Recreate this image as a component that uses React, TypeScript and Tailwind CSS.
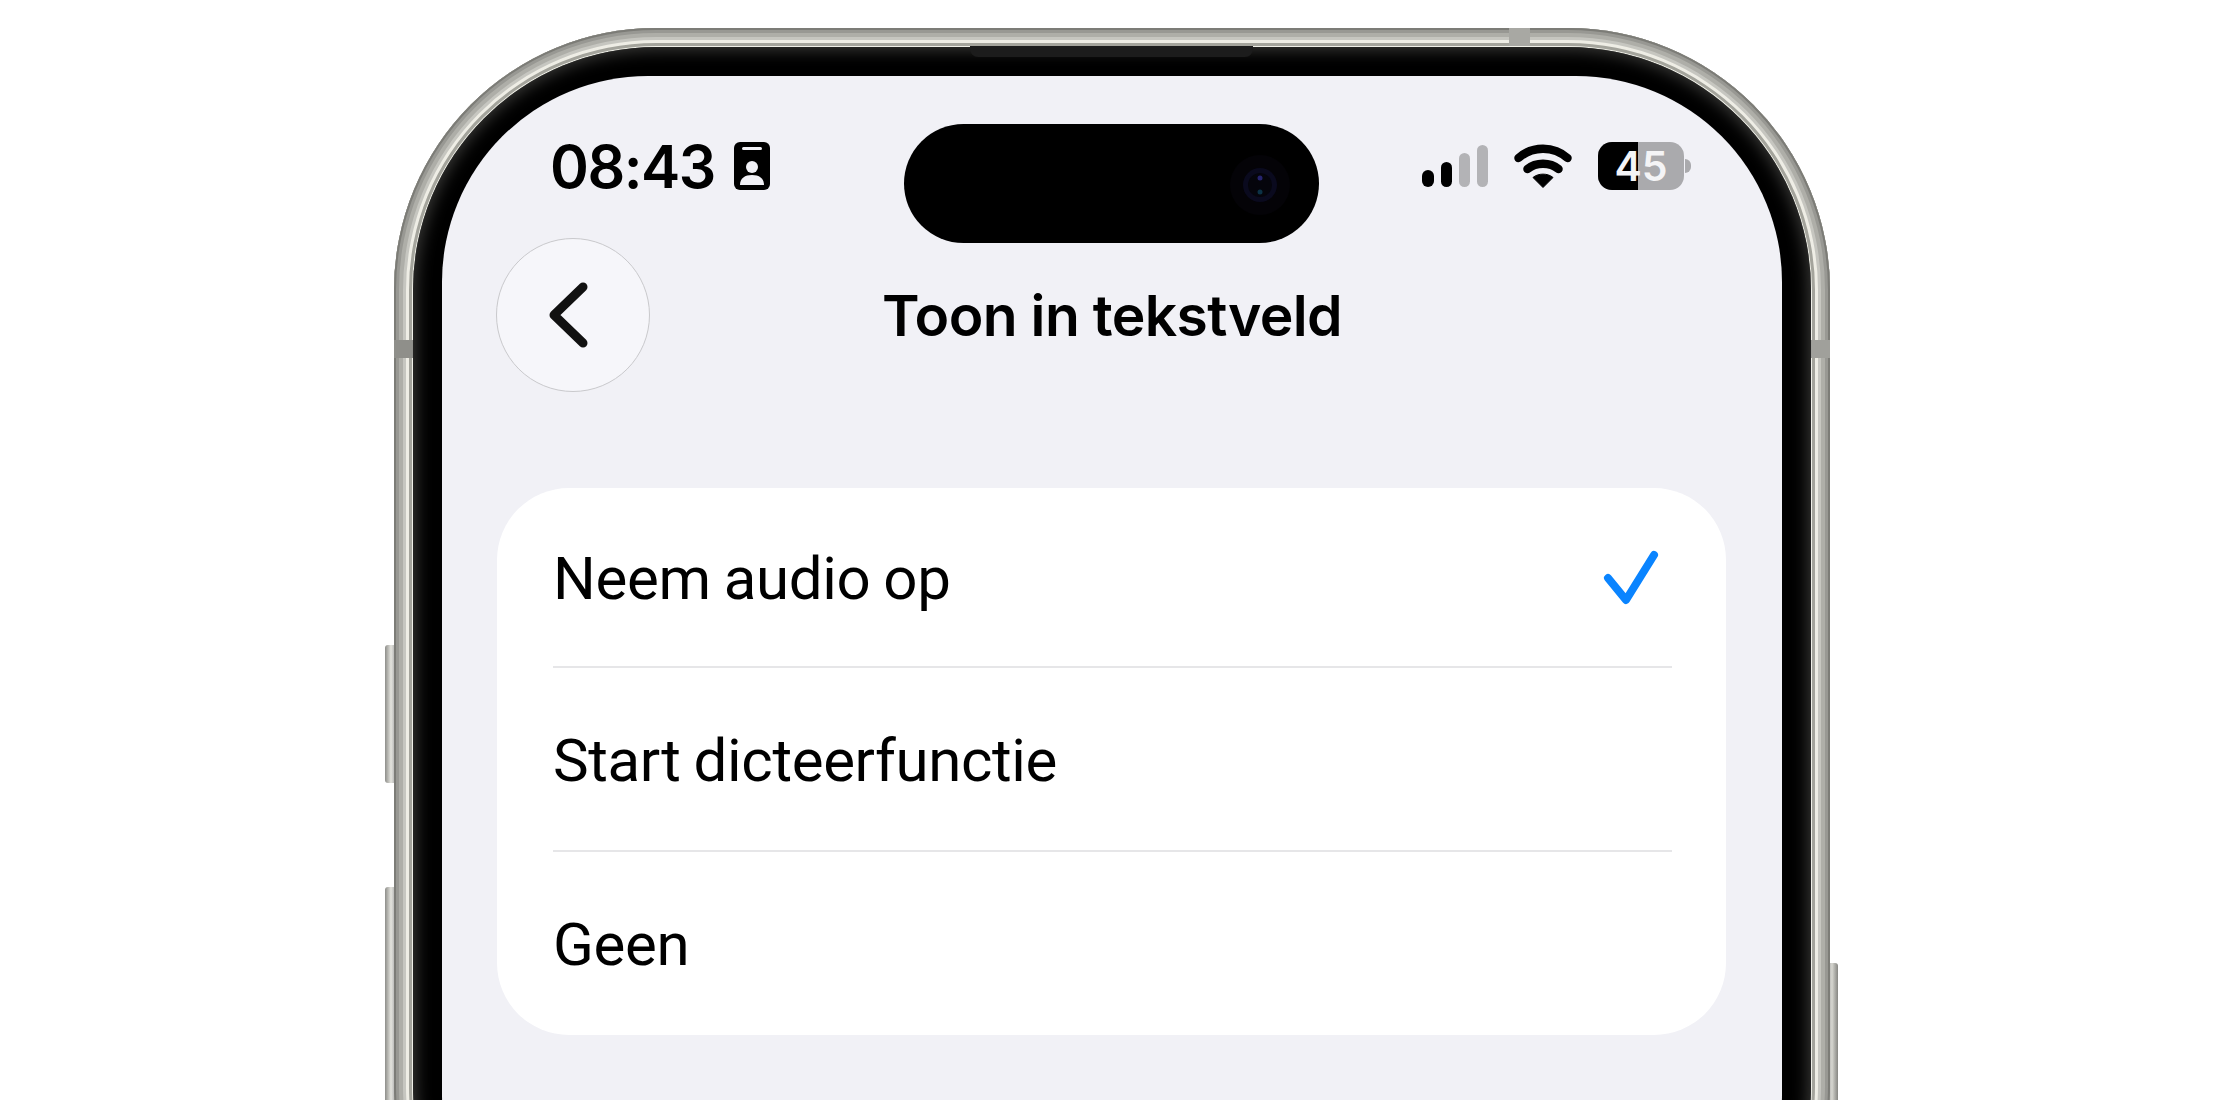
const rows = [
  { label: "Neem audio op", checked: true, height: "h-[180px]" },
  { label: "Start dicteerfunctie", checked: false, height: "h-[184px]" },
  { label: "Geen", checked: false, height: "h-[183px]" },
]

function IdCard() {
  return (
    <svg width="36" height="48" viewBox="0 0 36 48">
      <rect width="36" height="48" rx="6" fill="#000" />
      <rect x="8" y="5" width="20" height="3" rx="1.5" fill="#f1f1f6" />
      <circle cx="18" cy="25" r="6" fill="#f1f1f6" />
      <path d="M6 43c0-7 5-10 12-10s12 3 12 10z" fill="#f1f1f6" />
    </svg>
  )
}

function Signal() {
  return (
    <div className="flex h-[42px] items-end gap-[7px]">
      <div className="h-[17px] w-[12px] rounded-[6px] bg-black" />
      <div className="h-[25px] w-[11px] rounded-[6px] bg-black" />
      <div className="h-[34px] w-[11px] rounded-[6px] bg-[#b3b3b6]" />
      <div className="h-[42px] w-[11px] rounded-[6px] bg-[#b3b3b6]" />
    </div>
  )
}

function Wifi() {
  return (
    <svg width="58" height="44" viewBox="0 0 58 44" fill="none">
      <path d="M4.5 14C18 1.500 40 1.500 53.500 14" stroke="#000" strokeWidth="8.5" strokeLinecap="round" />
      <path d="M13.500 25C22 18 36 18 44.500 25" stroke="#000" strokeWidth="8.5" strokeLinecap="round" />
      <path d="M19 33.500C24 29 34 29 39 33.500L29 43.500z" fill="#000" stroke="#000" strokeWidth="1" strokeLinejoin="round" />
    </svg>
  )
}

function Battery() {
  return (
    <div className="flex items-center gap-[1px]">
      <div className="relative flex h-[48px] w-[86px] items-center justify-center overflow-hidden rounded-[14px] bg-[#aaaaad]">
        <div className="absolute inset-y-0 left-0 w-[40px] bg-black" />
        <span className="relative text-[41px] leading-none font-semibold text-[#f4f4f6]">45</span>
      </div>
      <div className="h-[14px] w-[6px] rounded-r-[6px] bg-[#aaaaad]" />
    </div>
  )
}

function Camera() {
  return (
    <svg width="60" height="60" viewBox="0 0 60 60" className="absolute top-[31px] right-[29px]">
      <circle cx="30" cy="30" r="30" fill="#040307" />
      <circle cx="30" cy="30" r="17" fill="#0a0a1e" />
      <circle cx="30" cy="30" r="12" fill="#05050c" />
      <circle cx="30" cy="23" r="2.500" fill="#26246e" />
      <circle cx="30" cy="37" r="2.500" fill="#0c3246" />
    </svg>
  )
}

export default function App() {
  return (
    <div className="flex h-[1100px] justify-center overflow-hidden bg-white pt-[28px] font-['Inter',sans-serif] text-black">
      <div className="relative h-[1320px] w-[1436px]">
        {/* side buttons */}
        <div className="absolute top-[617px] -left-[9px] h-[138px] w-[12px] rounded-l-[3px] bg-gradient-to-r from-[#8e8e8a] via-[#e4e4de] to-[#98989a]" />
        <div className="absolute top-[859px] -left-[9px] h-[300px] w-[12px] rounded-l-[3px] bg-gradient-to-r from-[#8e8e8a] via-[#e4e4de] to-[#98989a]" />
        <div className="absolute top-[935px] -right-[8px] h-[300px] w-[12px] rounded-r-[3px] bg-gradient-to-r from-[#98989a] via-[#d6d6d0] to-[#868682]" />

        <div className="relative h-full rounded-[262px] bg-[#f0f0e8] p-[19px] shadow-[inset_0_0_0_2px_#7c7c77,inset_0_0_0_5px_#989893,inset_0_0_0_9px_#aeaea8,inset_0_0_0_12px_#c6c6c0,inset_0_0_0_15px_#eeede5,inset_0_0_0_18px_#a4a49c]">
          <div className="h-full rounded-[243px] bg-black p-[29px] shadow-[inset_0_0_16px_3px_#3a3a38]">
            <div className="relative h-full rounded-[206px] bg-[#f1f1f6]">
              {/* dynamic island */}
              <div className="absolute top-[48px] left-[462px] h-[119px] w-[415px] rounded-full bg-black">
                <Camera />
              </div>

              <div className="flex flex-col pt-[50px]">
                <div className="flex h-[80px] items-center justify-between pr-[91px] pl-[108px]">
                  <div className="flex items-center gap-[19px]">
                    <span className="text-[59px] leading-none font-semibold tracking-[-1.5px]">08:43</span>
                    <IdCard />
                  </div>
                  <div className="flex items-center gap-[26px]">
                    <Signal />
                    <Wifi />
                    <Battery />
                  </div>
                </div>

                <div className="mt-[32px] grid grid-cols-[154px_1fr_154px] items-center px-[54px]">
                  <div className="flex h-[154px] w-[154px] items-center justify-center rounded-full border border-[#c9c9cc] bg-[#f6f6fa]">
                    <svg width="40" height="66" viewBox="0 0 40 66" fill="none" className="-ml-[11px]">
                      <path d="M35 5L6 33l29 28" stroke="#111" strokeWidth="9" strokeLinecap="round" strokeLinejoin="round" />
                    </svg>
                  </div>
                  <h1 className="text-center text-[57px] leading-none font-semibold tracking-[-0.65px]">Toon in tekstveld</h1>
                </div>

                <div className="mt-[96px] ml-[55px] w-[1229px] rounded-[72px] bg-white pr-[54px] pl-[56px] font-['Roboto',sans-serif]">
                  {rows.map((row, i) => (
                    <div
                      key={row.label}
                      className={`flex items-center justify-between text-[60px] ${row.height} ${i < rows.length - 1 ? "border-b-2 border-[#e6e6e8]" : ""}`}
                    >
                      <span className="pt-[3px] leading-none tracking-[-0.35px] [word-spacing:-1.5px]">{row.label}</span>
                      {row.checked && (
                        <svg width="60" height="56" viewBox="0 0 60 56" fill="none" className="mr-[10px]">
                          <path d="M6 29l18 22L52 6" stroke="#0a84ff" strokeWidth="8" strokeLinecap="round" strokeLinejoin="round" />
                        </svg>
                      )}
                    </div>
                  ))}
                </div>
              </div>
            </div>
          </div>
          {/* speaker slit */}
          <div className="absolute top-[18px] left-[576px] h-[11px] w-[283px] rounded-b-[8px] bg-[#1c1c1c]" />
        </div>

        {/* antenna bands */}
        <div className="absolute top-[312px] left-0 h-[18px] w-[19px] bg-[#8f8f8a]" />
        <div className="absolute top-[312px] right-0 h-[18px] w-[19px] bg-[#a0a09b]" />
        <div className="absolute top-0 left-[1115px] h-[18px] w-[21px] bg-[#a8a8a3]" />
      </div>
    </div>
  )
}
